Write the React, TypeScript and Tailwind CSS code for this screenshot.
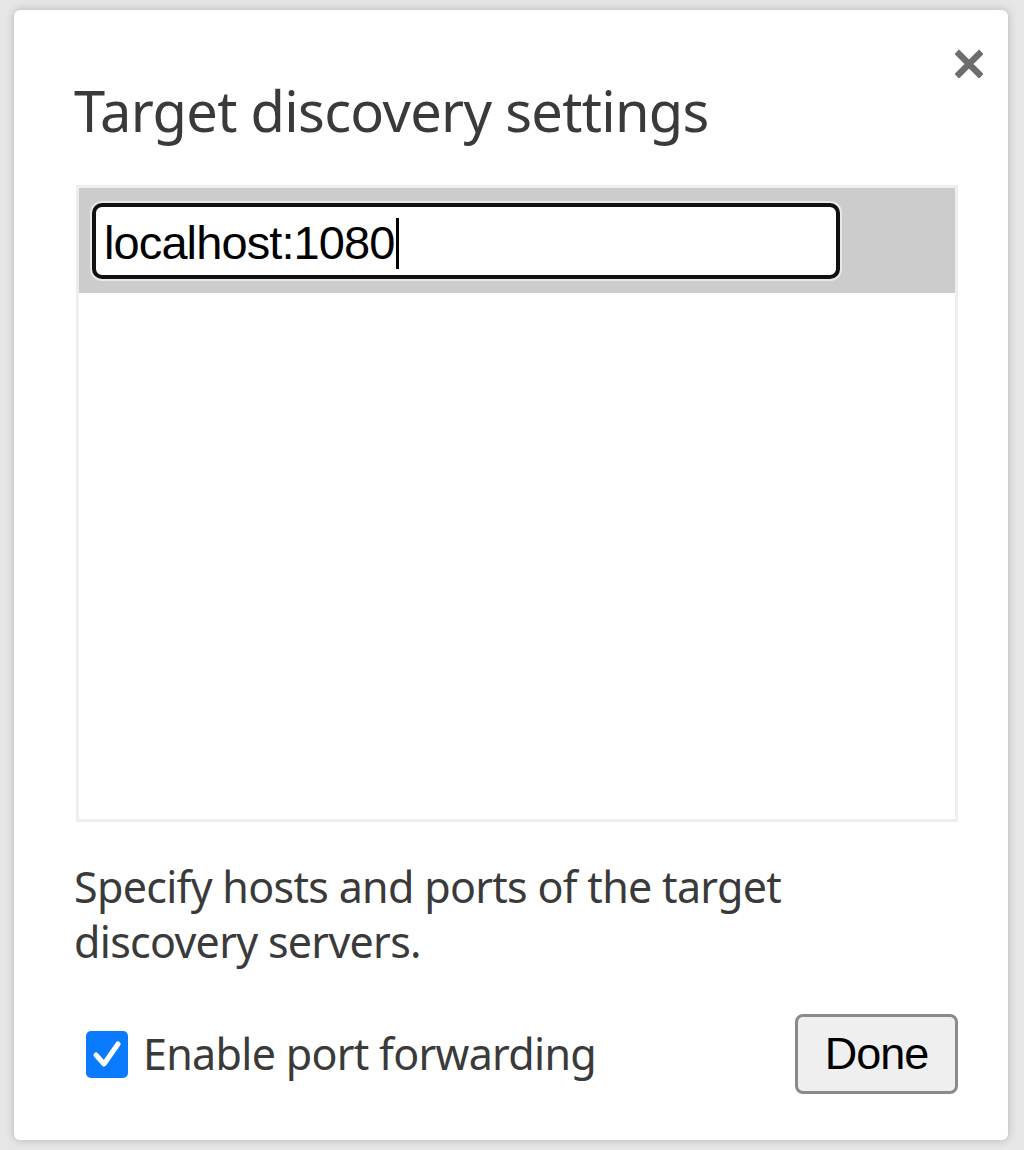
const sans = { fontFamily: '"Noto Sans", "Open Sans", sans-serif' };
const arial = { fontFamily: '"Liberation Sans", Arial, sans-serif' };

function CloseIcon() {
    return (
        <svg width="28" height="30" viewBox="0 0 28 30" aria-hidden="true">
            <path d="M4 6 L24 26 M24 6 L4 26" stroke="#6d6d6d" strokeWidth="6.5" strokeLinecap="square" fill="none" />
        </svg>
    );
}

function CheckBox() {
    return (
        <div className="flex h-[47px] w-[42px] items-center justify-center rounded-[5px] bg-[#0a7bff]">
            <svg width="30" height="32" viewBox="0 0 30 32" aria-hidden="true">
                <path d="M4 17 L12 26 L26 6" stroke="#ffffff" strokeWidth="5" fill="none" strokeLinejoin="round" strokeLinecap="round" />
            </svg>
        </div>
    );
}

export default function App() {
    return (
        <div className="h-[1150px] w-[1024px] bg-[#e6e6e6] pl-[14px] pt-[10px]">
            <div className="relative flex h-[1130px] w-[994px] flex-col rounded-[6px] bg-white pl-[60px] pr-[50px] shadow-[0_0_8px_rgba(0,0,0,0.22)]">
                <button className="absolute right-[25px] top-[38px]">
                    <CloseIcon />
                </button>

                <h1 className="mt-[72px] text-[56px] leading-[56px] tracking-[-0.7px] text-[#3a3a3a]" style={sans}>
                    Target discovery settings
                </h1>

                <div className="ml-[2px] mt-[47px] h-[637px] w-[882px] border-[3px] border-[#eeeeee] bg-white">
                    <div className="h-[105px] bg-[#cccccc] pl-[13px] pt-[15px]">
                        <div className="flex h-[76px] w-[748px] items-center rounded-[10px] border-[4px] border-[#111111] bg-white pl-[8px] pt-[4px] shadow-[0_0_0_2px_#e8e8e8]">
                            <span className="text-[47px] leading-[52px] tracking-[-0.9px] text-black" style={arial}>
                                localhost:1080
                            </span>
                            <span className="ml-[1px] h-[51px] w-[3px] bg-black" />
                        </div>
                    </div>
                </div>

                <p className="mt-[37px] w-[760px] text-[43px] leading-[55px] tracking-[-0.7px] text-[#3a3a3a]" style={sans}>
                    Specify hosts and ports of the target discovery servers.
                </p>

                <div className="mt-[45px] flex items-center justify-between">
                    <label className="ml-[12px] flex items-center gap-[15px]">
                        <CheckBox />
                        <span className="text-[43px] leading-[50px] tracking-[-0.7px] text-[#3a3a3a]" style={sans}>
                            Enable port forwarding
                        </span>
                    </label>
                    <button
                        className="flex h-[80px] w-[163px] items-center justify-center rounded-[8px] border-[3px] border-[#8a8a8a] bg-[#efefef] text-[45px] tracking-[-1px] text-black"
                        style={arial}
                    >
                        Done
                    </button>
                </div>
            </div>
        </div>
    );
}
